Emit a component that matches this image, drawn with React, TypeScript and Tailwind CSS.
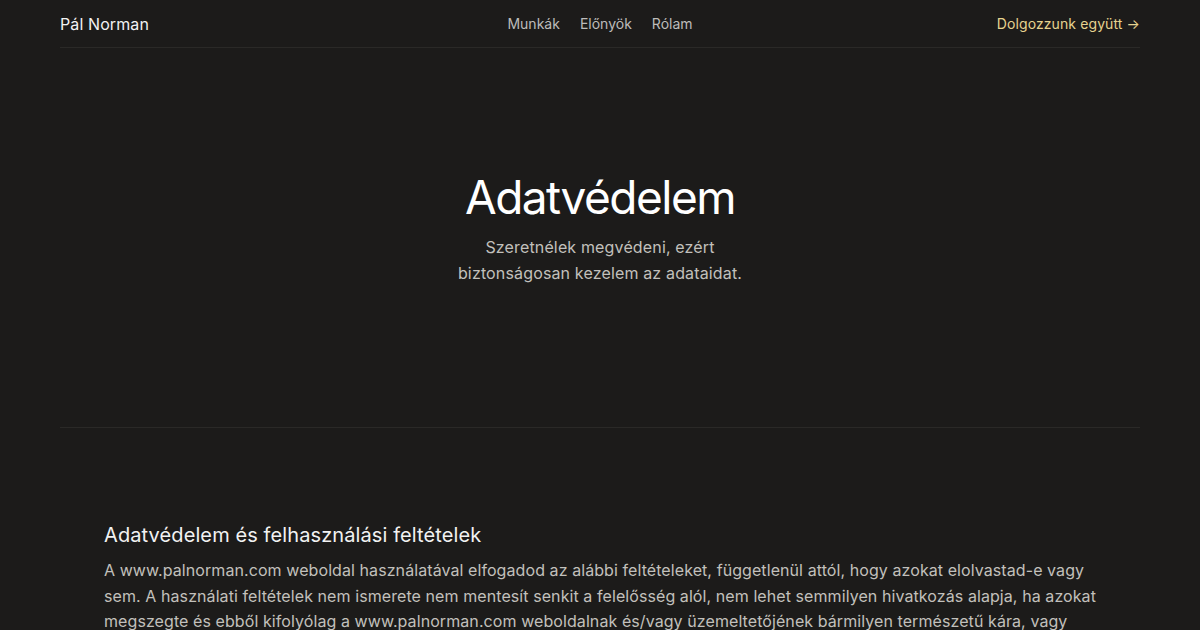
const navLinks = ["Munkák", "Előnyök", "Rólam"];

const Header = () => (
  <header className="mx-auto max-w-[1080px] h-12 border-b border-[#2a2927] grid grid-cols-3 items-center">
    <a className="text-base text-[#f2f2f2] tracking-[0.1px]">Pál Norman</a>
    <nav className="flex justify-center gap-5 text-sm text-[#bdbcba]">
      {navLinks.map((l) => (
        <a key={l}>{l}</a>
      ))}
    </nav>
    <a className="justify-self-end text-sm text-[#e6d38f] tracking-[0.1px]">
      Dolgozzunk együtt →
    </a>
  </header>
);

const Hero = () => (
  <section className="mx-auto max-w-[1080px] border-b border-[#2a2927] pt-[120px] pb-[141px] flex flex-col items-center text-center">
    <h1 className="text-[46px] leading-[58px] font-normal text-white tracking-[-1.5px]">
      Adatvédelem
    </h1>
    <p className="mt-[8px] max-w-[300px] text-base leading-[26px] text-[#c2c0bc] tracking-[0.15px]">
      Szeretnélek megvédeni, ezért biztonságosan kezelem az adataidat.
    </p>
  </section>
);

const Terms = () => (
  <section className="mx-auto max-w-[992px] pt-[93px] pb-20">
    <h2 className="text-xl leading-7 font-normal text-[#f2f2f2] tracking-[0.1px]">
      Adatvédelem és felhasználási feltételek
    </h2>
    <p className="mt-[9px] text-base leading-[25.6px] text-[#c2c0bc] tracking-[0.08px]">
      A www.palnorman.com weboldal használatával elfogadod az alábbi
      feltételeket, függetlenül attól, hogy azokat elolvastad-e vagy sem. A
      használati feltételek nem ismerete nem mentesít senkit a felelősség alól,
      nem lehet semmilyen hivatkozás alapja, ha azokat megszegte és ebből
      kifolyólag a www.palnorman.com weboldalnak és/vagy üzemeltetőjének
      bármilyen természetű kára, vagy hátránya keletkezik. A weboldalon
      található tartalmak szerzői jogvédelem alatt állnak.
    </p>
  </section>
);

const App = () => {
  return (
    <div className="min-h-screen bg-[#1c1b1a] font-['Inter',sans-serif] antialiased">
      <Header />
      <Hero />
      <Terms />
    </div>
  );
};

export default App;
